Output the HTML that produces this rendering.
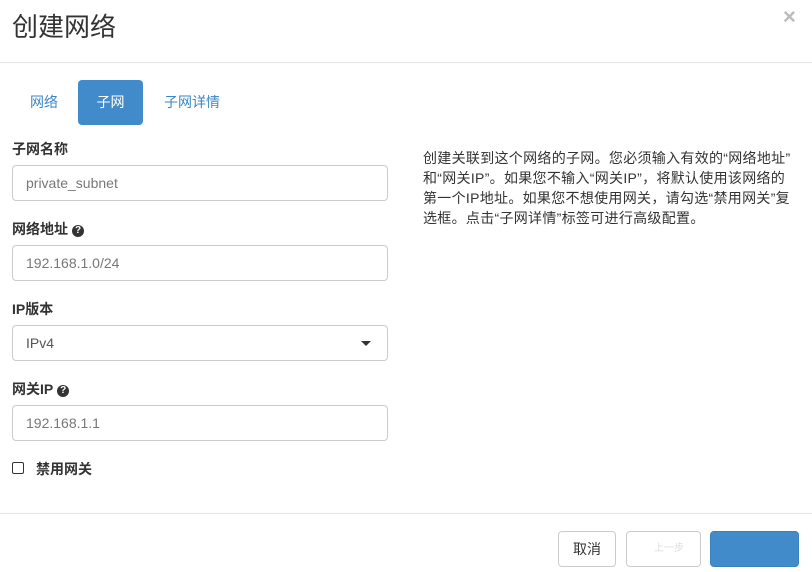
<html><head><style>
body{margin:0;width:812px;height:572px;background:#fff;font-family:"Liberation Sans","Noto Sans CJK SC",sans-serif;position:relative;overflow:hidden;color:#333}
.a{position:absolute}
.title{left:12px;top:9px;font-size:26px;color:#333;line-height:36px}
.close{left:783px;top:4px;font-size:22px;color:#bbb;font-weight:bold}
.hr{left:0;width:812px;height:1px;background:#e5e5e5}
.tab{font-size:14px;color:#3a87c8;line-height:45px;top:80px;text-align:center}
.lbl{left:12px;font-size:14px;font-weight:bold;color:#333}
.inp{left:12px;width:374px;height:34px;border:1px solid #ccc;border-radius:4px;font-size:14px;color:#555;line-height:34px;text-indent:13px}
.q{display:inline-block;width:12px;height:12px;border-radius:50%;background:#333;color:#fff;font-size:10px;line-height:12px;text-align:center;vertical-align:1px;margin-left:4px}
.desc{left:423px;top:148px;font-size:14px;line-height:20px;color:#333;white-space:nowrap;letter-spacing:0.3px}
.btn{top:531px;height:34px;border:1px solid #ccc;border-radius:4px;font-size:14px;line-height:34px;text-align:center}
</style></head><body>
<div class="a title">创建网络</div>
<div class="a close">×</div>
<div class="a hr" style="top:62px"></div>
<div class="a tab" style="left:26px;width:36px">网络</div>
<div class="a tab" style="left:78px;width:65px;height:45px;background:#428bca;color:#fff;border-radius:4px">子网</div>
<div class="a tab" style="left:160px;width:64px">子网详情</div>
<div class="a lbl" style="top:139px">子网名称</div>
<div class="a inp" style="top:165px;color:#777">private_subnet</div>
<div class="a lbl" style="top:219px">网络地址<span class="q">?</span></div>
<div class="a inp" style="top:245px;color:#777">192.168.1.0/24</div>
<div class="a lbl" style="top:299px">IP版本</div>
<div class="a inp" style="top:325px">IPv4<span style="position:absolute;right:16px;top:15px;width:0;height:0;border-left:5px solid transparent;border-right:5px solid transparent;border-top:5px solid #333"></span></div>
<div class="a lbl" style="top:379px">网关IP<span class="q">?</span></div>
<div class="a inp" style="top:405px;color:#777">192.168.1.1</div>
<div class="a" style="left:12px;top:462px;width:10px;height:10px;border:1px solid #333;border-radius:2px"></div>
<div class="a lbl" style="left:36px;top:459px">禁用网关</div>
<div class="a desc">创建关联到这个网络的子网。您必须输入有效的“网络地址”<br>和“网关IP”。如果您不输入“网关IP”，将默认使用该网络的<br>第一个IP地址。如果您不想使用网关，请勾选“禁用网关”复<br>选框。点击“子网详情”标签可进行高级配置。</div>
<div class="a hr" style="top:513px"></div>
<div class="a btn" style="left:558px;width:56px;color:#333">取消</div>
<div class="a btn" style="left:626px;width:73px;color:#ddd;font-size:10px">&nbsp;&nbsp;&nbsp;&nbsp;上一步</div>
<div class="a btn" style="left:710px;width:87px;background:#428bca;border-color:#3a80c0"></div>
</body></html>
